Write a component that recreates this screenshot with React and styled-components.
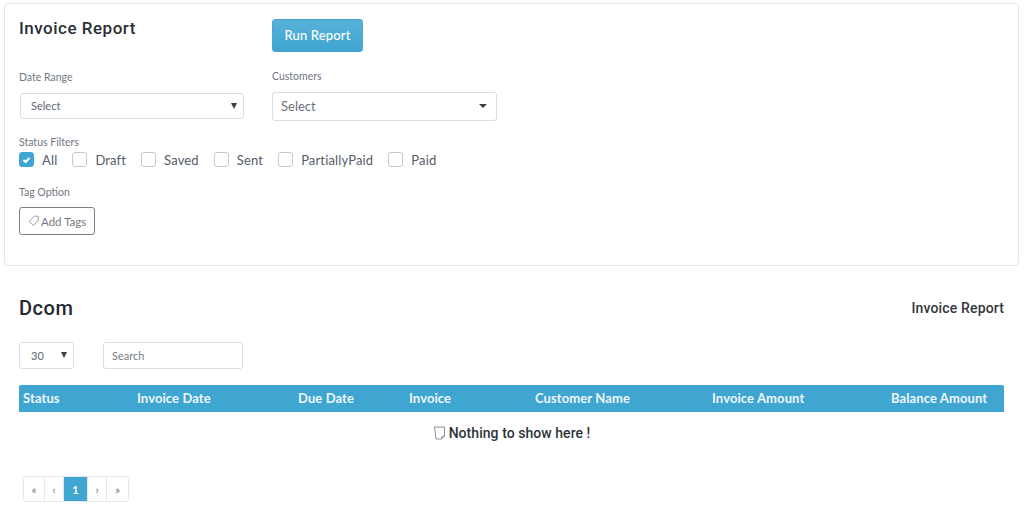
import React from "react";
import styled, { createGlobalStyle } from "styled-components";

const Global = createGlobalStyle`
  html, body { margin: 0; padding: 0; background: #fff; }
  body { font-family: "Lato", "Liberation Sans", sans-serif; color: #3c4858; }
  * { box-sizing: border-box; }
`;
const Page = styled.div`
  width: 1024px; height: 509px; overflow: hidden;
  padding: 3px 5px 0 4px;
`;
const Card = styled.section`
  height: 263px; border: 1px solid #e3e6ea; border-radius: 4px;
  padding: 15px 14px;
`;
const TopRow = styled.div`
  display: grid; grid-template-columns: 253px 1fr; height: 33px;
`;
const Title = styled.h2`
  margin: 0; font: 500 17px/18px "Roboto", sans-serif; letter-spacing: .5px; color: #2b2f36;
`;
const RunButton = styled.button`
  width: 91px; height: 33px; border: 1px solid #48a8d3; border-radius: 3px;
  background: linear-gradient(#58b1d8, #3fa5d1); color: #fff;
  font: 500 13px/29px "Lato", sans-serif; letter-spacing: .15px; padding: 0;
`;
const FieldRow = styled.div`
  display: grid; grid-template-columns: 253px 225px; margin-top: 18px;
`;
const Label = styled.div`
  font: 400 10.5px/13px "Lato", sans-serif; color: #707782;
  margin-top: ${p => p.$top || 0}px;
`;
const SelectBox = styled.div`
  display: flex; align-items: center; justify-content: space-between;
  height: ${p => p.$h}px; width: ${p => p.$w}px;
  margin-top: ${p => p.$top || 0}px; margin-left: ${p => p.$left || 0}px;
  border: 1px solid #d9dee5; border-radius: 3px; background: #fff;
  padding: 0 ${p => p.$pr}px 1px ${p => p.$pl}px;
  font: 400 ${p => p.$fs}px "Lato", sans-serif; color: ${p => p.$color || "#5f6670"};
`;
const Caret = styled.svg`
  width: ${p => p.$w}px; height: ${p => p.$h}px; fill: #3a3f47; display: block;
`;
const CheckRow = styled.div`
  display: flex; align-items: center; height: 17px; margin-top: 2px;
`;
const CheckItem = styled.label`
  display: flex; align-items: center; margin-left: ${p => p.$gap || 0}px;
  font: 400 13px "Lato", sans-serif; letter-spacing: .15px; color: #555c69;
`;
const CheckBox = styled.span`
  width: 15px; height: 15px; border-radius: 3px; margin-right: 8px;
  display: flex; align-items: center; justify-content: center;
  background: ${p => (p.$on ? "#3fa5d1" : "#fff")};
  border: 1px solid ${p => (p.$on ? "#3fa5d1" : "#c4c9d0")};
`;
const TagButton = styled.button`
  display: flex; align-items: center; gap: 1px; width: 76px; height: 28px; margin-top: 8px;
  border: 1px solid #7a818b; border-radius: 3px; background: #fff; padding: 0 0 0 8px;
  font: 400 11.5px "Lato", sans-serif; color: #727983;
`;
const HeadRow = styled.div`
  display: flex; justify-content: space-between; align-items: flex-start;
  padding: 0 15px; margin-top: 30px; height: 45px;
`;
const Company = styled.h1`
  margin: 0; font: 500 20px/24px "Roboto", sans-serif; letter-spacing: .55px; color: #25282e;
`;
const ReportName = styled.div`
  font: 500 14px/22px "Roboto", sans-serif; color: #33373e; letter-spacing: .15px; margin-top: 1px;
`;
const Controls = styled.div`
  display: flex; gap: 29px; padding: 0 15px; margin-top: 1px;
`;
const SearchInput = styled.div`
  width: 140px; height: 27px; border: 1px solid #d9dee5; border-radius: 3px;
  padding-left: 8px; display: flex; align-items: center;
  font: 400 11px "Lato", sans-serif; color: #747b86;
`;
const TableWrap = styled.div`
  margin: 16px 15px 0;
`;
const HeaderRow = styled.div`
  display: grid; grid-template-columns: 114px 161px 111px 126px 177px 179px 1fr;
  height: 27px; align-items: center; padding: 0 0 1px 4px;
  background: #3fa5d1; border-radius: 2px 2px 0 0;
  font: 700 13px "Lato", sans-serif; letter-spacing: .1px; color: #eef7fb;
`;
const Empty = styled.div`
  display: flex; align-items: center; justify-content: center; gap: 3px; height: 42px;
  font: 500 14px "Roboto", sans-serif; letter-spacing: .05px; color: #2f343c;
`;
const Pager = styled.nav`
  display: inline-flex; height: 26px; margin: 22px 0 0 19px;
  border: 1px solid #e6e8eb; border-radius: 3px; overflow: hidden;
`;
const PageCell = styled.span`
  display: flex; align-items: center; justify-content: center;
  width: ${p => p.$w}px; font: ${p => (p.$on ? 700 : 400)} 11px "Lato", sans-serif;
  color: ${p => (p.$on ? "#fff" : "#68707a")};
  background: ${p => (p.$on ? "#3fa5d1" : "#fff")};
  border-right: ${p => (p.$last ? "0" : "1px solid #e6e8eb")};
`;

const Down = ({ w, h }) => (
  <Caret $w={w} $h={h} viewBox="0 0 10 6" preserveAspectRatio="none"><path d="M0 0h10L5 6z" /></Caret>
);
const filters = [["All", true, 0], ["Draft", false, 15], ["Saved", false, 15], ["Sent", false, 15], ["PartiallyPaid", false, 15], ["Paid", false, 15]];
const columns = ["Status", "Invoice Date", "Due Date", "Invoice", "Customer Name", "Invoice Amount", "Balance Amount"];
const pages = [["«", 21], ["‹", 19], ["1", 24, true], ["›", 19], ["»", 21]];

export default function App() {
  return (
    <Page>
      <Global />
      <Card>
        <TopRow>
          <Title>Invoice Report</Title>
          <RunButton>Run Report</RunButton>
        </TopRow>
        <FieldRow>
          <div>
            <Label $top={1}>Date Range</Label>
            <SelectBox $w={224} $h={26} $top={9} $left={1} $pl={10} $pr={6} $fs={11}>
              Select <Down w={6} h={6} />
            </SelectBox>
          </div>
          <div>
            <Label>Customers</Label>
            <SelectBox $w={225} $h={29} $top={9} $pl={8} $pr={9} $fs={13} $color="#6a717b">
              Select <Down w={8} h={4} />
            </SelectBox>
          </div>
        </FieldRow>
        <Label $top={15}>Status Filters</Label>
        <CheckRow>
          {filters.map(([name, on, gap]) => (
            <CheckItem key={name} $gap={gap}>
              <CheckBox $on={on}>
                {on && (
                  <svg width="9" height="8" viewBox="0 0 9 8" fill="none" stroke="#fff" strokeWidth="2">
                    <path d="M1.5 4l2 2 4-4" />
                  </svg>
                )}
              </CheckBox>
              {name}
            </CheckItem>
          ))}
        </CheckRow>
        <Label $top={18}>Tag Option</Label>
        <TagButton>
          <svg width="12" height="12" viewBox="0 0 12 12" fill="none" stroke="#8a9099" strokeWidth=".9">
            <path d="M6.5 1.2h3.8v3.9L5.4 10.6 1.2 6.3z" />
          </svg>
          Add Tags
        </TagButton>
      </Card>
      <HeadRow>
        <Company>Dcom</Company>
        <ReportName>Invoice Report</ReportName>
      </HeadRow>
      <Controls>
        <SelectBox $w={55} $h={27} $pl={11} $pr={6} $fs={11}>
          30 <Down w={6} h={6} />
        </SelectBox>
        <SearchInput>Search</SearchInput>
      </Controls>
      <TableWrap>
        <HeaderRow>
          {columns.map(c => <div key={c}>{c}</div>)}
        </HeaderRow>
        <Empty>
          <svg width="13" height="14" viewBox="0 0 13 14" fill="none" stroke="#7d8590" strokeWidth=".9">
            <path d="M1.5 1h10v9l-3 3h-5.5z" />
            <path d="M11.5 10l-2.5 .5L8.5 13" />
          </svg>
          Nothing to show here !
        </Empty>
      </TableWrap>
      <Pager>
        {pages.map(([t, w, on], i) => (
          <PageCell key={i} $w={w} $on={on} $last={i === pages.length - 1}>{t}</PageCell>
        ))}
      </Pager>
    </Page>
  );
}
